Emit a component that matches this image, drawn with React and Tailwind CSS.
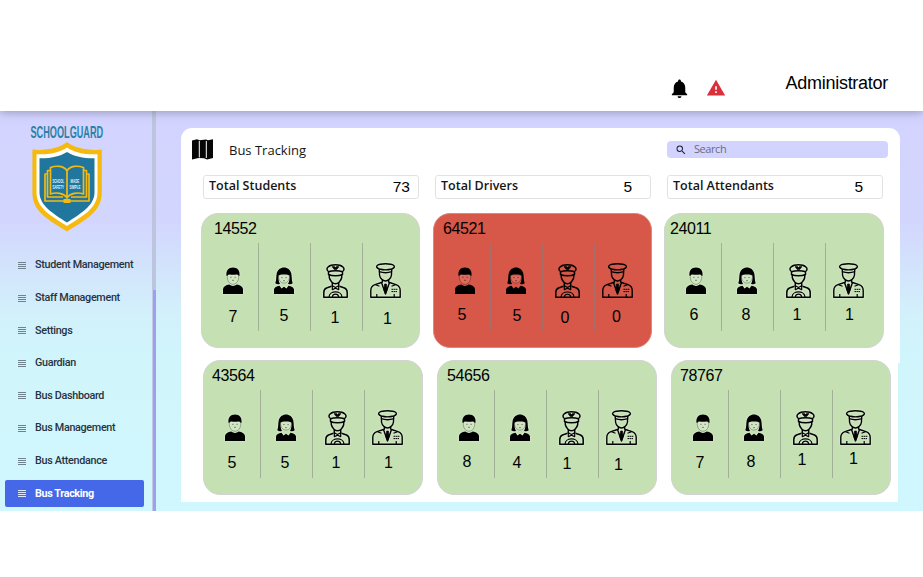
import React from "react";
import { MdNotifications, MdWarning, MdSearch } from "react-icons/md";

const MENU = [
  "Student Management",
  "Staff Management",
  "Settings",
  "Guardian",
  "Bus Dashboard",
  "Bus Management",
  "Bus Attendance",
  "Bus Tracking",
];

const STATS = [
  { label: "Total Students", value: 73, pad: "pr-[8px]" },
  { label: "Total Drivers", value: 5, pad: "pr-[18px]" },
  { label: "Total Attendants", value: 5, pad: "pr-[19px]" },
];

// counts: [value, x nudge, y nudge] for boys, girls, drivers, attendants
const ROWS = [
  [
    { id: "14552", box: "ml-[20px] w-[219px]", title: "ml-[12px]", counts: [[7, 0, 2], [5, 0, 1], [1, 0, 3], [1, 0, 4]] },
    { id: "64521", box: "ml-[13px] w-[219px]", title: "ml-[9px]", red: true, counts: [[5, -3, 0], [5, 1, 1], [0, -2, 3], [0, -3, 2]] },
    { id: "24011", box: "ml-[12px] w-[220px]", title: "ml-[5px]", counts: [[6, -2, 0], [8, -1, 0], [1, -1, 0], [1, -1, 0]] },
  ],
  [
    { id: "43564", box: "ml-[22px] w-[220px]", title: "ml-[8px]", counts: [[5, -3, 1], [5, -1, 1], [1, -1, 1], [1, -1, 1]] },
    { id: "54656", box: "ml-[14px] w-[220px]", title: "ml-[9px]", counts: [[8, -2, 0], [4, -3, 1], [1, -4, 2], [1, -5, 3]] },
    { id: "78767", box: "ml-[14px] w-[220px]", title: "ml-[8px]", counts: [[7, -3, 1], [8, -3, 0], [1, -3, -2], [1, -4, -3]] },
  ],
];

function Logo() {
  return (
    <svg viewBox="0 0 80 110" className="h-[110px] w-[80px] overflow-visible">
      <text transform="translate(3.5 16) scale(.555 1)" fontFamily="'Liberation Sans',sans-serif" fontWeight="700" fontSize="16.5" fill="#2c81a5">
        SCHOOLGUARD
      </text>
      <path d="M40 20C33 26 18 29 5.400 27.500V72C6 91 24 99 40 109.500C56 99 74 91 74.800 72V27.500C62 29 47 26 40 20Z" fill="#f5b90f" />
      <path d="M40 25.500C32 31 20 33 9.500 32.200V71C10 87 26 95 40 104C54 95 70 87 70.500 71V32.200C60 33 48 31 40 25.500Z" fill="#fff" />
      <path d="M40 30C32 35 22 36.500 12.500 36.200V71C13 84 27 92 40 100.500C53 92 67 84 67.500 71V36.200C58 36.500 48 35 40 30Z" fill="#20769c" />
      <g fill="none" stroke="#f5b90f" strokeWidth="1.700" strokeLinejoin="round">
        <path d="M40 49C37 43.500 29 43.500 23.500 45.500V72C29 70 37 71 40 76C43 71 51 70 56.500 72V45.500C51 43.500 43 43.500 40 49V76" />
        <path d="M23 48.500H20.500V75H36M57 48.500H59.500V75H44" />
        <path d="M20 52H18V79H62V52H60" />
      </g>
      <path d="M36.500 77H43.500V81H36.500Z" fill="#f5b90f" />
      <g fill="#e4f4fb" fontFamily="'Liberation Sans',sans-serif" fontWeight="700" fontSize="4.9">
        <text transform="translate(25.5 60.6) scale(.56 1)">SCHOOL</text>
        <text transform="translate(25.5 67.2) scale(.6 1)">SAFETY</text>
        <text transform="translate(43.6 60.6) scale(.6 1)">MADE</text>
        <text transform="translate(42.6 67.2) scale(.6 1)">SIMPLE</text>
      </g>
    </svg>
  );
}

function MapIcon() {
  return (
    <svg viewBox="0 0 21 21" className="ml-[11px] mt-[11px] h-[21px] w-[21px]">
      <path d="M0 1.500L5 .2L7.500 1.200L14 .4L16 1.200L21 .2V19L15 20.400L12 19.300L6.500 19L0 20.600Z" fill="#060606" />
      <path d="M7.300 2V18.500M14.300 2V19" stroke="#fff" strokeWidth="1" />
    </svg>
  );
}

function Boy() {
  return (
    <svg viewBox="0 0 20 27" className="h-[27px] w-[20px]">
      <path d="M4.300 8V10.500C5 19.500 15 19.500 15.700 10.500V8" fill="#fff" fillOpacity=".12" stroke="#000" strokeOpacity=".4" strokeWidth=".7" />
      <path d="M3.600 9C2.600 3.500 5.500 .4 10 .4S17.400 3.500 16.400 9L15.400 8.400C15 7.900 14.500 7.600 13.500 7.500C11 7.900 9 7.900 6.500 7.500C5.500 7.600 5 7.900 4.600 8.400Z" fill="#000" />
      <path d="M7.300 10.300H8.500M11.500 10.300H12.700M9.200 13.300H10.800" stroke="#000" strokeOpacity=".6" strokeWidth=".9" />
      <path d="M0 27V22C.4 19.300 3 18.200 6.200 17.600C8.500 19.400 11.500 19.400 13.800 17.600C17 18.200 19.600 19.300 20 22V27Z" fill="#000" />
    </svg>
  );
}

function Girl() {
  return (
    <svg viewBox="0 0 20 27" className="h-[27px] w-[20px]">
      <path d="M4.600 9C4.300 18.500 15.700 18.500 15.400 9" fill="#fff" fillOpacity=".12" stroke="#000" strokeOpacity=".4" strokeWidth=".7" />
      <path d="M1.300 16.300C2.600 13 2 10 2.700 6.500C3.600 2.500 6.500 .4 10 .4S16.400 2.500 17.300 6.500C18 10 17.400 13 18.700 16.300C17 17.600 15.500 17.500 14 16.700C15.200 15 15.800 12 15.500 8.800C14.500 7.900 13 7.600 10 7.500C7 7.600 5.500 7.900 4.500 8.800C4.200 12 4.800 15 6 16.700C4.500 17.500 3 17.600 1.300 16.300Z" fill="#000" />
      <path d="M7.300 10.600H8.500M11.500 10.600H12.700M9.200 13.700H10.800" stroke="#000" strokeOpacity=".6" strokeWidth=".9" />
      <path d="M0 27V22.500C.4 20.500 2.500 19.400 5.500 18.800L7.500 21.500L10 19.800L12.500 21.500L14.500 18.800C17.500 19.400 19.600 20.500 20 22.500V27Z" fill="#000" />
    </svg>
  );
}

function Driver() {
  return (
    <svg viewBox="0 0 25 34" className="h-[34px] w-[25px]" fill="none" stroke="#000" strokeWidth="1.500" strokeLinejoin="round">
      <path d="M5.500 7.500C1.500 4.500 6 .8 12.500 .8S23.500 4.500 19.500 7.500V10.500C16 12.300 9 12.300 5.500 10.500Z" />
      <path d="M5.500 7.800C9 6.500 16 6.500 19.500 7.800" />
      <path d="M9 2.600H11.500L12.500 3.400L13.500 2.600H16L13.800 5.500H11.200Z" fill="#000" strokeWidth=".6" />
      <path d="M6.300 11V13.500C7 17 10 19.800 12.500 19.800S18 17 18.700 13.500V11" />
      <path d="M9.300 18.500V22M15.700 18.500V22" />
      <path d="M12.500 23.600L9.300 21.800V25.600L12.500 24.200L15.700 25.600V21.800Z" strokeWidth="1.200" />
      <path d="M8.500 22.300L3.500 24C1.500 24.800 .8 26.500 .8 28.500V33.200H24.200V28.500C24.200 26.500 23.500 24.800 21.500 24L16.500 22.300" />
      <path d="M6 33C6.500 26.300 18.500 26.300 19 33M9.300 33C10 29.300 15 29.300 15.700 33" strokeWidth="1.200" />
    </svg>
  );
}

function Officer() {
  return (
    <svg viewBox="0 0 31 35" className="h-[35px] w-[31px]" fill="none" stroke="#000" strokeWidth="1.400" strokeLinejoin="round">
      <path d="M9.300 6C3.500 3.500 7.500 .8 15.500 .8S27.500 3.500 21.700 6C18 7 13 7 9.300 6Z" />
      <path d="M9.300 6V8.700C13 10 18 10 21.700 8.700V6" />
      <path d="M9.500 9V12C10 15.500 13 18 15.500 18S21 15.500 21.500 12V9M12.300 16.800V19.800M18.700 16.800V19.800" />
      <path d="M11.500 19.500L5 21.700C2 22.700 .8 25 .8 27.500V34.200H30.200V27.500C30.200 25 29 22.700 26 21.700L19.500 19.500L15.500 31Z" />
      <path d="M14.500 21H16.500L17.200 27L15.500 31L13.800 27Z" fill="#000" strokeWidth=".6" />
      <path d="M5.500 21.800L9.500 23.300M25.500 21.800L21.500 23.300M6.800 31V34M24.200 31V34" strokeWidth="1.200" />
      <path d="M21.500 26.300H27.500M21.500 28.600H27" strokeWidth="1" strokeDasharray="1.700 .4" />
    </svg>
  );
}

const CELLS = [
  { Icon: Boy, cell: "w-[56px]", icon: "pl-[21px] pt-[24px]", count: "pl-[21px] w-[41px]" },
  { Icon: Girl, cell: "w-[52px] border-l", icon: "pl-[15px] pt-[24px]", count: "pl-[14px] w-[36px]" },
  { Icon: Driver, cell: "w-[52px] border-l", icon: "pl-[12px] pt-[21px]", count: "pl-[12px] w-[36px]" },
  { Icon: Officer, cell: "w-[57px] border-l", icon: "pl-[7px] pt-[20px]", count: "pl-[12px] w-[37px]" },
];

function BusCard({ bus }) {
  const tone = bus.red ? "bg-[#d75748] border-[#d98a80]" : "bg-[#c5e0b3] border-[#d3d3d3]";
  const line = bus.red ? "border-[#a86e68]" : "border-[#a2b098]";
  const halo = bus.red ? "" : "[filter:drop-shadow(0_0_1px_rgba(255,255,255,0.6))]";
  return (
    <section className={`h-[135px] shrink-0 rounded-[17px] border ${tone} ${bus.box}`}>
      <h3 className={`mt-[6px] h-[18px] text-[16px] leading-[18px] tracking-[-0.4px] ${bus.title}`}>{bus.id}</h3>
      <div className="mt-[5px] flex h-[88px]">
        {CELLS.map(({ Icon, cell, icon, count }, i) => {
          const [value, dx, dy] = bus.counts[i];
          return (
            <div key={i} className={`h-[88px] shrink-0 ${cell} ${line}`}>
              <div className={`h-[63px] ${icon} ${halo}`}>
                <Icon />
              </div>
              <div className={`text-center text-[16px] leading-[18px] ${count}`} style={{ transform: `translate(${dx}px, ${dy}px)` }}>
                {value}
              </div>
            </div>
          );
        })}
      </div>
    </section>
  );
}

export default function App() {
  return (
    <div className="flex h-[577px] w-[923px] flex-col overflow-hidden bg-white font-['Liberation_Sans',Arial,sans-serif] text-black">
      <header className="z-10 flex h-[111px] shrink-0 justify-end bg-white shadow-[0_1px_9px_rgba(80,90,110,0.5)]">
        <MdNotifications className="mt-[77px] h-[23px] w-[23px]" />
        <MdWarning className="ml-[15px] mt-[78px] h-[20px] w-[20px] text-[#dc2f3c]" />
        <div className="ml-[60px] mr-[35px] mt-[73px] text-[18px] leading-[20px] tracking-[-0.28px]">Administrator</div>
      </header>

      <div className="flex h-[400px] shrink-0 bg-[linear-gradient(#d3d3ff_0px,#d2d6fe_110px,#d2e3fc_155px,#d2f1fb_205px,#d0f6fc_260px,#d0f7fe_400px)]">
        <aside className="flex w-[152px] shrink-0 flex-col">
          <div className="ml-[27px] mt-[11px] h-[110px]"><Logo /></div>
          <nav className="ml-[5px] mt-[20px] flex w-[139px] flex-col gap-[5.600px]">
            {MENU.map((item) => {
              const active = item === "Bus Tracking";
              return (
                <a key={item} className={`flex h-[27px] shrink-0 items-center rounded-[2px] pl-[13px] font-['Roboto',sans-serif] text-[10.8px] ${active ? "bg-[#4468e8] font-bold tracking-[-0.035em] text-white" : "font-medium tracking-[-0.03em] text-[#27333f]"}`}>
                  <span className="mr-[9px] flex w-[8px] flex-col gap-[1px]">
                    {[0, 1, 2, 3].map((n) => (
                      <span key={n} className={`h-px ${active ? "bg-[#dfe6ff]" : "bg-[#70828e]"}`} />
                    ))}
                  </span>
                  {item}
                </a>
              );
            })}
          </nav>
        </aside>
        <div className="flex w-[4px] shrink-0 flex-col bg-[#c3c8e6]">
          <div className="h-[179px] bg-[#bcc4de]" />
          <div className="mx-auto w-[3px] flex-1 bg-[#9da0ee]" />
        </div>

        <main className="ml-[25px] mt-[17px] h-[374px] w-[719px] shrink-0 rounded-t-[11px] bg-white [clip-path:polygon(0_0,100%_0,100%_235px,717px_235px,717px_100%,0_100%)]">
          <div className="flex h-[47px]">
            <MapIcon />
            <h1 className="ml-[16px] mt-[13px] w-[438px] font-['Open_Sans',sans-serif] text-[13px] font-medium leading-[18px] text-[#151515]">Bus Tracking</h1>
            <label className="mt-[13px] flex h-[17px] w-[221px] items-center rounded-[4px] bg-[#d3d3ff] font-['Open_Sans',sans-serif] text-[11px] tracking-[-0.04em] text-[#6c6c7d]">
              <MdSearch className="ml-[8px] mr-[7px] h-[12px] w-[12px] text-[#20202c]" />
              Search
            </label>
          </div>
          <div className="ml-[22px] flex gap-[16px]">
            {STATS.map((s) => (
              <div key={s.label} className={`flex h-[24px] w-[216px] justify-between rounded-[3px] border border-[#e2e2e2] pl-[5px] ${s.pad}`}>
                <span className="mt-[1px] font-['Open_Sans',sans-serif] text-[12.500px] font-semibold leading-[18px] text-[#161616]">{s.label}</span>
                <span className="mt-[2px] text-[15.500px] leading-[18px]">{s.value}</span>
              </div>
            ))}
          </div>
          <div className="mt-[14px] flex flex-col gap-[12px]">
            {ROWS.map((row, i) => (
              <div key={i} className="flex">
                {row.map((bus) => <BusCard key={bus.id} bus={bus} />)}
              </div>
            ))}
          </div>
        </main>
      </div>
    </div>
  );
}
